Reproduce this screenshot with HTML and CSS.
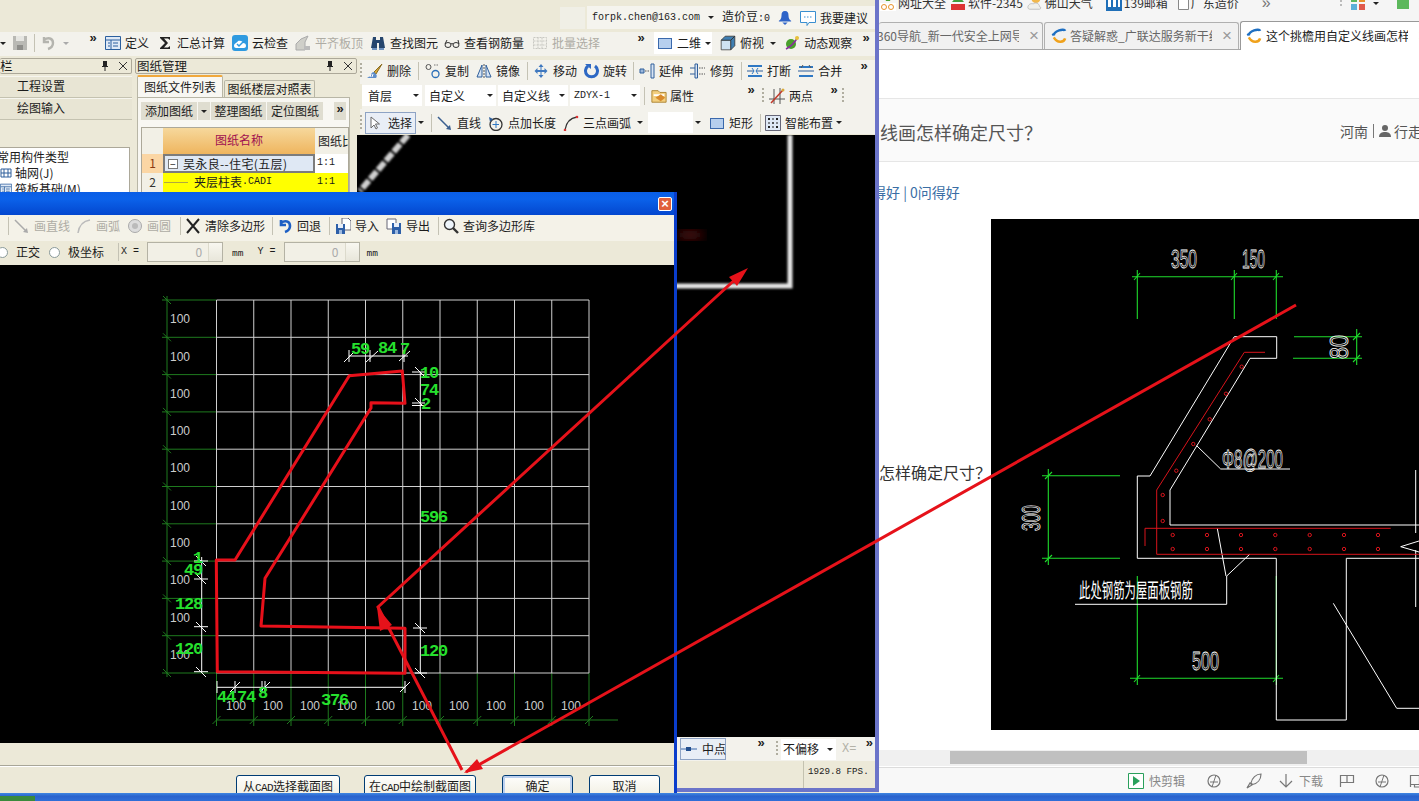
FILE: index.html
```html
<!DOCTYPE html>
<html lang="zh">
<head>
<meta charset="utf-8">
<title>挑檐截面</title>
<link rel="stylesheet" href="styles.css">
</head>
<body>
<svg class="sprite" aria-hidden="true">
  <symbol id="i-save" viewBox="0 0 16 16"><path d="M1 1h14v14H1z" fill="#b9b9b4"/><path d="M4 1h8v5H4z" fill="#e6e6e2"/><path d="M5 10h6v5H5z" fill="#8e8e8a"/></symbol>
  <symbol id="i-undo" viewBox="0 0 16 16"><path d="M4 5c4-3 9-2 9 3 0 3-2 5-5 6M4 2v5h5" fill="none" stroke="#b4b4ae" stroke-width="2.4"/></symbol>
  <symbol id="i-undob" viewBox="0 0 16 16"><path d="M4 5c4-3 9-2 9 3 0 3-2 5-5 6M4 2v5h5" fill="none" stroke="#1d5fc4" stroke-width="2.6"/></symbol>
  <symbol id="i-def" viewBox="0 0 16 16"><path d="M.5 1.5h15v13H.5z" fill="#dfe9f6" stroke="#2b5f9e"/><path d="M1 5h14M6 5v9M3 8h2M3 11h2M8 8h5M8 11h5" stroke="#2b5f9e" fill="none"/></symbol>
  <symbol id="i-sum" viewBox="0 0 16 16"><path d="M3 2h10v3l-2-1.500H7l4 4.500-4 4.500h4l2-1.500v3H3v-1l5-5-5-5z" fill="#222"/></symbol>
  <symbol id="i-cloud" viewBox="0 0 16 16"><rect width="16" height="16" rx="3" fill="#2f9ae0"/><path d="M2 11c0-3 3-3 4-5 3-1 5 1 5 2 2 0 3 1 3 3 0 1-1 2-2 2H4c-1 0-2-1-2-2z" fill="#fff"/><path d="M5 9l2 2 4-4" stroke="#2f9ae0" stroke-width="1.500" fill="none"/></symbol>
  <symbol id="i-level" viewBox="0 0 16 16"><path d="M1 15V9l5-5 7-3-3 6v8z" fill="#cfcfc9" stroke="#aaa"/><path d="M9 11h6v4H9z" fill="#bbb"/></symbol>
  <symbol id="i-bino" viewBox="0 0 16 16"><path d="M3 2h3v3h4V2h3l2 11H9V8H7v5H1z" fill="#26466e"/><path d="M2 13h5v2H2zM9 13h5v2H9z" fill="#6f93c0"/></symbol>
  <symbol id="i-glass" viewBox="0 0 16 16"><ellipse cx="4" cy="10" rx="3" ry="2.500" fill="none" stroke="#333"/><ellipse cx="12" cy="10" rx="3" ry="2.500" fill="none" stroke="#333"/><path d="M7 9q1-1 2 0M1 9l2-4M15 9l-1-4" fill="none" stroke="#333"/></symbol>
  <symbol id="i-batch" viewBox="0 0 16 16"><path d="M1.500 2.500h13v11h-13zM1.500 6h13M1.500 10h13M6 2.500v11M10 2.500v11" fill="none" stroke="#c8c8c2" stroke-dasharray="2 1"/></symbol>
  <symbol id="i-axis" viewBox="0 0 12 12"><path d="M1 2h10v8H1zM1 6h10M4 2v8M8 2v8" fill="none" stroke="#2f5f9b"/></symbol>
  <symbol id="i-rect" viewBox="0 0 16 16"><rect x="1.500" y="3.500" width="13" height="10" fill="#b6cfee" stroke="#3a69ac"/></symbol>
  <symbol id="i-cube" viewBox="0 0 20 20"><path d="M1.500 6.500h12v12h-12z" fill="#cfe3f2" stroke="#444"/><path d="M1.500 6.500l5-5h12l-5 5zM13.500 6.500l5-5v12l-5 5z" fill="#3f7fb2" stroke="#333"/></symbol>
  <symbol id="i-orbit" viewBox="0 0 16 16"><circle cx="7" cy="9" r="5" fill="#4aa02c"/><path d="M2 14C6 12 11 7 14 2" stroke="#8a2f9e" stroke-width="1.500" fill="none"/><circle cx="13" cy="3" r="2" fill="#e8c33a"/></symbol>
  <symbol id="i-del" viewBox="0 0 16 16"><path d="M15 1L7 9l2 2z" fill="#d8a93a" stroke="#8a6c20"/><path d="M7 9c-2 0-3 2-4 4l-3 2h9c1-1 1-3 0-4z" fill="#5f8ecb"/><path d="M4 11l-1 3M6 11l-1 3" stroke="#fff"/></symbol>
  <symbol id="i-copy" viewBox="0 0 16 16"><circle cx="3.500" cy="4" r="2.500" fill="none" stroke="#555"/><circle cx="10.500" cy="11" r="3.500" fill="none" stroke="#2b6fb8" stroke-width="1.300"/><path d="M9 2h5" stroke="#777" stroke-dasharray="1.500 1"/></symbol>
  <symbol id="i-mirror" viewBox="0 0 16 16"><path d="M6 2L1 14h5zM10 2l5 12h-5z" fill="#d6e3f3" stroke="#2f5f9b"/><path d="M8 1v14" stroke="#555" stroke-dasharray="2 1"/></symbol>
  <symbol id="i-move" viewBox="0 0 16 16"><path d="M8 1l2.500 3h-2v3h3v-2l3 3-3 3V9h-3v3h2L8 15l-2.500-3h2V9h-3v2l-3-3 3-3v2h3V4h-2z" fill="#3f78bf"/></symbol>
  <symbol id="i-rotate" viewBox="0 0 16 16"><path d="M5 3a6 6 0 1 0 7 0" fill="none" stroke="#2d68c4" stroke-width="3"/><path d="M2 1h6v5z" fill="#2d68c4"/></symbol>
  <symbol id="i-extend" viewBox="0 0 16 16"><path d="M1 6h4v4H1z" fill="#9cb8dc" stroke="#2f5f9b"/><path d="M6 8h5" stroke="#555" stroke-dasharray="1.500 1"/><path d="M12 1h3v14h-3z" fill="#d8e4f3" stroke="#2f5f9b"/></symbol>
  <symbol id="i-trim" viewBox="0 0 16 16"><path d="M5 1h2.500v14H5z" fill="#d8e4f3" stroke="#2f5f9b"/><path d="M0 5h5M0 11h5" stroke="#2f5f9b"/><path d="M9 5h6M9 11h6" stroke="#555" stroke-dasharray="1.500 1"/></symbol>
  <symbol id="i-break" viewBox="0 0 16 16"><path d="M1 3h14M1 13h14" stroke="#2f78c4" stroke-width="2"/><path d="M0 8h7M9 8h7" stroke="#2f5f9b"/><path d="M5 5l2 3-2 3M11 5L9 8l2 3" stroke="#2f78c4" fill="none"/></symbol>
  <symbol id="i-merge" viewBox="0 0 16 16"><path d="M1 4h14M1 13h14" stroke="#2f78c4" stroke-width="2"/><path d="M0 8h16" stroke="#2f5f9b"/><path d="M5 2l-2 3M11 2l2 3" stroke="#555"/></symbol>
  <symbol id="i-prop" viewBox="0 0 18 18"><path d="M1 3h7l2 2h7v11H1z" fill="#f3cf7f" stroke="#a8802c"/><path d="M3 7h12v2H3z" fill="#fff"/><path d="M5 11l6-4 5 4-5 4z" fill="#d88a2c"/></symbol>
  <symbol id="i-two" viewBox="0 0 16 16"><path d="M0 11h16M5 1v15M11 0v16" stroke="#555" fill="none"/><path d="M2 15L14 2" stroke="#c0392b" stroke-width="1.500"/><circle cx="14" cy="2" r="1.500" fill="#d8a93a"/></symbol>
  <symbol id="i-arrow" viewBox="0 0 16 16"><path d="M4 2v11l3-3 2 4 1.500-1-2-4h4z" fill="#fff" stroke="#6a6a6a"/></symbol>
  <symbol id="i-line" viewBox="0 0 16 16"><path d="M1 2l11 11" stroke="#3a5f8f" stroke-width="1.500"/><path d="M14 15l-5-1 4-4z" fill="#3a5f8f"/></symbol>
  <symbol id="i-linegr" viewBox="0 0 16 16"><path d="M1 2l11 11" stroke="#aaa" stroke-width="1.500"/><path d="M14 15l-5-1 4-4z" fill="#aaa"/></symbol>
  <symbol id="i-plen" viewBox="0 0 16 16"><circle cx="8" cy="9.500" r="6" fill="none" stroke="#333" stroke-width="1.300"/><path d="M8 6v7M4.500 9.500H11" stroke="#2f78c4"/><path d="M1 2l4 2-3 3z" fill="#2f5f9b"/></symbol>
  <symbol id="i-arc" viewBox="0 0 16 16"><path d="M2 15C3 8 7 3 14 2" stroke="#333" fill="none" stroke-width="1.300"/><circle cx="2" cy="15" r="1.300" fill="#d33"/><circle cx="14" cy="2" r="1.300" fill="#d33"/></symbol>
  <symbol id="i-arcgr" viewBox="0 0 16 16"><path d="M2 15C3 8 7 3 14 2" stroke="#bbb" fill="none" stroke-width="1.500"/></symbol>
  <symbol id="i-circlegr" viewBox="0 0 16 16"><circle cx="8" cy="8" r="6.500" fill="#ddd" stroke="#aaa"/><circle cx="8" cy="8" r="3" fill="#bbb"/></symbol>
  <symbol id="i-smart" viewBox="0 0 16 16"><path d="M.5.5h15v15H.5z" fill="#dfe9f6" stroke="#667"/><path d="M8 3v10M3 8h10" stroke="#222" stroke-dasharray="2 2"/><path d="M3 3h2v2H3zM11 3h2v2h-2zM3 11h2v2H3zM11 11h2v2h-2z" fill="#222"/></symbol>
  <symbol id="i-bell" viewBox="0 0 14 16"><path d="M7 0c3 0 4 2 4 5s1 5 3 6v1H0v-1c2-1 3-3 3-6s1-5 4-5z" fill="#2f64c8"/><path d="M4 13h6l-3 3z" fill="#2f64c8"/></symbol>
  <symbol id="i-chat" viewBox="0 0 16 16"><path d="M.5 1.500h15v11H9l-2 3v-3H.5z" fill="#fff" stroke="#3a8fd0"/><path d="M4 7h8" stroke="#3a8fd0" stroke-dasharray="1.500 1.500"/></symbol>
  <symbol id="i-x" viewBox="0 0 16 16"><path d="M2 1l12 14M14 1L2 15" stroke="#222" stroke-width="2"/></symbol>
  <symbol id="i-imp" viewBox="0 0 16 16"><path d="M7 0h6l3 3v9H7z" fill="#fff" stroke="#667"/><path d="M1 6h9v10H1z" fill="#2d5fa8"/><path d="M3 6h5v4H3z" fill="#e8eef8"/><path d="M4 12h3v4H4z" fill="#9db9df"/></symbol>
  <symbol id="i-exp" viewBox="0 0 16 16"><path d="M1 1h9v10H1z" fill="#fff" stroke="#667"/><path d="M6 5h9v11H6z" fill="#2d5fa8"/><path d="M8 5h5v4H8z" fill="#e8eef8"/><path d="M9 12h3v4H9z" fill="#9db9df"/></symbol>
  <symbol id="i-find" viewBox="0 0 16 16"><circle cx="6.500" cy="6.500" r="5" fill="#eef5fb" stroke="#333" stroke-width="1.400"/><path d="M10 10l5 5" stroke="#333" stroke-width="2.400"/></symbol>
  <symbol id="i-mid" viewBox="0 0 16 16"><path d="M0 8h16" stroke="#3a69ac"/><path d="M5 6h5v4H5z" fill="#234f8f"/></symbol>
  <symbol id="i-ie" viewBox="0 0 17 17"><path d="M3 8C3 3 14 0 15 3" fill="none" stroke="#1e6fc2" stroke-width="2.600"/><path d="M3 10c4 7 11 5 12 1" fill="none" stroke="#f0a21c" stroke-width="2.600"/><circle cx="2" cy="7" r="1.200" fill="#1e6fc2"/></symbol>
  <symbol id="i-person" viewBox="0 0 12 12"><circle cx="6" cy="3" r="3" fill="#666"/><path d="M0 12c0-4 3-5 6-5s6 1 6 5z" fill="#666"/></symbol>
  <symbol id="i-pin" viewBox="0 0 10 12"><path d="M3 1h4v5h1v1H5.500v4h-1V7H2V6h1z" fill="#222"/></symbol>
  <symbol id="i-close" viewBox="0 0 10 10"><path d="M1 1l8 8M9 1L1 9" stroke="#333"/></symbol>
  <symbol id="i-hao" viewBox="0 0 16 16"><path d="M4 0h8l-2 6H6z" fill="#4a9f2c"/><path d="M0 8h16v8H0z" fill="#fff"/><circle cx="4" cy="12" r="2.500" fill="none" stroke="#e8912c"/><circle cx="11" cy="12" r="2.500" fill="none" stroke="#e8912c"/></symbol>
  <symbol id="i-2345" viewBox="0 0 16 16"><path d="M2 7l6-7 6 7z" fill="#3f9f3c"/><path d="M1 9h14v6H1z" fill="#d33"/></symbol>
  <symbol id="i-sun" viewBox="0 0 18 16"><circle cx="10" cy="3" r="5" fill="#f2b84a"/><path d="M1 13c0-3 3-5 6-4 2-2 7-1 7 3 2 0 2 3 0 3H3c-1 0-2-1-2-2z" fill="#f0f0ea" stroke="#bbb"/></symbol>
  <symbol id="i-139" viewBox="0 0 16 16"><path d="M0 0h16v16H0z" fill="#1f6fb8"/><path d="M2 3h3v9H2zM7 3h3v9H7zM12 3h2v9h-2z" fill="#fff"/></symbol>
  <symbol id="i-doc" viewBox="0 0 11 14"><path d="M.5.500h7l3 3v10H.5z" fill="#fff" stroke="#888"/></symbol>
  <symbol id="i-apps" viewBox="0 0 14 14"><path d="M0 0h6v6H0z" fill="#5cb85c"/><path d="M8 0h6v6H8z" fill="#e8912c"/><path d="M0 8h6v6H0z" fill="#5cb0d8"/><path d="M8 8h6v6H8z" fill="#e05a4c"/></symbol>
  <symbol id="i-cut" viewBox="0 0 16 16"><path d="M.5.500h15v15H.5z" fill="#fff" stroke="#2aa05c"/><path d="M5 3l7 5-7 5z" fill="#2aa05c"/></symbol>
  <symbol id="i-e1" viewBox="0 0 16 16"><circle cx="8" cy="8" r="6" fill="none" stroke="#777" stroke-width="1.200"/><path d="M4 9h8M10 2L6 14" stroke="#777"/></symbol>
  <symbol id="i-rocket" viewBox="0 0 16 16"><path d="M15 1c-5 0-9 4-10 9l1.500 1.500c5-1 8.500-5 8.500-10.500zM1 15l3-5 2 2z" fill="none" stroke="#777" stroke-width="1.200"/></symbol>
  <symbol id="i-down" viewBox="0 0 16 16"><path d="M8 1v13M2 8l6 6 6-6" fill="none" stroke="#777" stroke-width="1.200"/></symbol>
  <symbol id="i-flag" viewBox="0 0 16 16"><path d="M1.500 14V2.500h13v7h-13M8 2.500v7" fill="none" stroke="#777" stroke-width="1.200"/></symbol>
  <symbol id="i-win" viewBox="0 0 16 16"><path d="M1.500 14V2.500h9v9h-9zM10.500 6h4v8h-9v-2.500" fill="none" stroke="#777" stroke-width="1.200"/></symbol>
</svg>

<div class="desktop">

  <section class="app">
    <div class="strip">
      <span class="strip-cell"></span>
      <div class="strip-bar">
        <span class="lat">forpk.chen@163.com</span>
        <i class="caret ml8"></i>
        <span class="ml8">造价豆<span class="lat">:0</span></span>
        <svg class="ic14 ml8"><use href="#i-bell"/></svg>
        <svg class="ic ml8"><use href="#i-chat"/></svg>
        <span class="ml4">我要建议</span>
      </div>
    </div>

    <div class="tb row2">
      <i class="caret"></i>
      <svg class="ic ml6"><use href="#i-save"/></svg>
      <i class="sep ml6"></i>
      <svg class="ic ml5"><use href="#i-undo"/></svg>
      <i class="caret ml7 dim"></i>
      <b class="chev ml19">»</b>
      <span class="ti ml7"><svg class="ic"><use href="#i-def"/></svg>定义</span>
      <span class="ti ml8"><svg class="ic"><use href="#i-sum"/></svg>汇总计算</span>
      <span class="ti ml7"><svg class="ic"><use href="#i-cloud"/></svg>云检查</span>
      <span class="ti ml7 off"><svg class="ic"><use href="#i-level"/></svg>平齐板顶</span>
      <span class="ti ml7"><svg class="ic"><use href="#i-bino"/></svg>查找图元</span>
      <span class="ti ml6"><svg class="ic"><use href="#i-glass"/></svg>查看钢筋量</span>
      <span class="ti ml8 off"><svg class="ic"><use href="#i-batch"/></svg>批量选择</span>
      <b class="chev ml36">»</b>
      <span class="view ml8"><svg class="ic"><use href="#i-rect"/></svg><span>二维</span><i class="caret"></i></span>
      <span class="ti ml8"><svg class="ic"><use href="#i-cube"/></svg>俯视</span>
      <i class="caret ml6"></i>
      <span class="ti ml8"><svg class="ic"><use href="#i-orbit"/></svg>动态观察</span>
      <b class="chev ml9">»</b>
    </div>

    <div class="app-body">
      <aside class="side">
        <div class="ptitle"><span class="ptitle-t cut">栏</span><svg class="pin"><use href="#i-pin"/></svg><svg class="cls"><use href="#i-close"/></svg></div>
        <div class="nav">工程设置</div>
        <div class="nav">绘图输入</div>
        <div class="tree">
          <div class="tree-h">常用构件类型</div>
          <div class="tree-i"><svg class="ic12"><use href="#i-axis"/></svg>轴网(J)</div>
          <div class="tree-i"><svg class="ic12"><use href="#i-def"/></svg>筏板基础(M)</div>
        </div>
      </aside>

      <aside class="drawings">
        <div class="ptitle"><span class="ptitle-t">图纸管理</span><svg class="pin"><use href="#i-pin"/></svg><svg class="cls"><use href="#i-close"/></svg></div>
        <div class="tabs">
          <span class="dtab on">图纸文件列表</span>
          <span class="dtab">图纸楼层对照表</span>
        </div>
        <div class="dbody">
          <div class="dtools">
            <span class="dbtn w57">添加图纸</span><span class="dbtn w12"><i class="caret"></i></span><span class="dbtn w56">整理图纸</span><span class="dbtn w57">定位图纸</span>
            <b class="dbtn w13 more">»</b>
          </div>
          <div class="dtable">
            <span class="th0"></span><span class="th">图纸名称</span><span class="th2">图纸比</span>
            <span class="num n1">1</span><span class="nm sel-cell"><i class="minus">−</i>吴永良--住宅(五层)</span><span class="sc lat">1:1</span>
            <span class="num">2</span><span class="nm yel"><i class="tl"></i>夹层柱表<span class="lat">.CADI</span></span><span class="sc yel lat">1:1</span>
          </div>
        </div>
      </aside>

      <main class="work">
        <div class="tb row3">
          <i class="grip"></i>
          <span class="ti ml5"><svg class="ic"><use href="#i-del"/></svg>删除</span>
          <i class="sep ml7"></i>
          <span class="ti ml6"><svg class="ic"><use href="#i-copy"/></svg>复制</span>
          <span class="ti ml7"><svg class="ic"><use href="#i-mirror"/></svg>镜像</span>
          <i class="sep ml7"></i>
          <span class="ti ml5"><svg class="ic"><use href="#i-move"/></svg>移动</span>
          <span class="ti ml6"><svg class="ic"><use href="#i-rotate"/></svg>旋转</span>
          <i class="sep ml6"></i>
          <span class="ti ml5"><svg class="ic"><use href="#i-extend"/></svg>延伸</span>
          <span class="ti ml7"><svg class="ic"><use href="#i-trim"/></svg>修剪</span>
          <i class="sep ml7"></i>
          <span class="ti ml5"><svg class="ic"><use href="#i-break"/></svg>打断</span>
          <span class="ti ml7"><svg class="ic"><use href="#i-merge"/></svg>合并</span>
          <b class="chev ml17">»</b>
        </div>
        <div class="tb row4">
          <span class="sel w60">首层<i class="caret"></i></span>
          <span class="sel w71 ml3">自定义<i class="caret"></i></span>
          <span class="sel w70 ml2">自定义线<i class="caret"></i></span>
          <span class="sel w70 ml2"><span class="lat">ZDYX-1</span><i class="caret"></i></span>
          <i class="sep ml4"></i>
          <span class="ti ml6 tight"><svg class="ic"><use href="#i-prop"/></svg>属性</span>
          <b class="chev ml52">»</b>
          <i class="grip ml6"></i>
          <span class="ti ml5"><svg class="ic"><use href="#i-two"/></svg>两点</span>
          <b class="chev ml16">»</b>
          <i class="grip ml3"></i>
        </div>
        <div class="tb row5">
          <i class="grip"></i>
          <span class="pick ml3"><svg class="ic"><use href="#i-arrow"/></svg>选择</span>
          <i class="caret ml2"></i>
          <i class="sep ml7"></i>
          <span class="ti ml5"><svg class="ic"><use href="#i-line"/></svg>直线</span>
          <span class="ti ml7"><svg class="ic"><use href="#i-plen"/></svg>点加长度</span>
          <span class="ti ml7"><svg class="ic"><use href="#i-arc"/></svg>三点画弧</span>
          <i class="caret ml6"></i>
          <span class="blank ml5"></span>
          <i class="caret ml2"></i>
          <span class="ti ml8"><svg class="ic"><use href="#i-rect"/></svg>矩形</span>
          <i class="sep ml7"></i>
          <span class="ti ml4"><svg class="ic"><use href="#i-smart"/></svg>智能布置</span>
          <i class="caret ml3"></i>
        </div>
        <svg class="cad-bg" viewBox="357 136 518 602">
          <defs>
            <filter id="soft"><feGaussianBlur stdDeviation="1.300"/></filter>
            <filter id="softer"><feGaussianBlur stdDeviation="6"/></filter>
          </defs>
          <rect x="357" y="136" width="518" height="602" fill="#000"/>
          <path d="M790 136V287H670" fill="none" stroke="#e4e4e4" stroke-width="5" filter="url(#soft)"/>
          <path d="M408 136L360 192" fill="none" stroke="#d0d0d0" stroke-width="6" stroke-dasharray="10 2" filter="url(#soft)"/>
          <ellipse cx="690" cy="236" rx="14" ry="5" fill="#5a1010" filter="url(#softer)"/>
        </svg>
        <div class="tb status">
          <span class="pick mid"><svg class="ic"><use href="#i-mid"/></svg>中点</span>
          <b class="chev ml30">»</b>
          <i class="grip ml10"></i>
          <span class="nudge ml3">不偏移<i class="caret"></i></span>
          <span class="xeq ml6">X=</span>
          <b class="chev ml8">»</b>
        </div>
        <div class="fps"><span class="fps-v lat">1929.8 FPS.</span></div>
      </main>
    </div>
  </section>

  <section class="browser">
    <div class="marks">
      <span class="mk"><svg class="ic"><use href="#i-hao"/></svg>网址大全</span>
      <span class="mk"><svg class="ic"><use href="#i-2345"/></svg>软件-2345</span>
      <span class="mk"><svg class="ic"><use href="#i-sun"/></svg>佛山天气</span>
      <span class="mk"><svg class="ic"><use href="#i-139"/></svg>139邮箱</span>
      <span class="mk"><svg class="ic11"><use href="#i-doc"/></svg>广东造价</span>
      <span class="mk-more">»</span>
      <span class="mk-grip"></span>
      <svg class="ic14 apps"><use href="#i-apps"/></svg>
      <i class="caret ml8"></i>
      <span class="mk-green"></span>
    </div>
    <div class="btabs">
      <span class="btab b1"><span class="btab-t">360导航_新一代安全上网导</span><span class="btab-x">×</span></span>
      <span class="btab b2"><svg class="ic"><use href="#i-ie"/></svg><span class="btab-t">答疑解惑_广联达服务新干线</span><span class="btab-x">×</span></span>
      <span class="btab b3"><svg class="ic"><use href="#i-ie"/></svg><span class="btab-t">这个挑檐用自定义线画怎样</span><span class="btab-x">×</span></span>
    </div>
    <div class="band">
      <h1 class="q-title">线画怎样确定尺寸？</h1>
      <div class="q-user"><span>河南</span><i class="bar"></i><svg class="ic12"><use href="#i-person"/></svg><span>行走</span></div>
    </div>
    <div class="stats">得好 | 0问得好</div>
    <div class="post">
      <p class="post-q">怎样确定尺寸？</p>
      <svg class="detail" viewBox="991 219 428 511">
        <rect x="991" y="219" width="428" height="511" fill="#000"/>
        <g fill="none" stroke="#1fdc2c" stroke-width="1.100">
          <path d="M1132 276.700H1283M1137.300 270V319M1234.300 270V319M1276.300 270V319"/>
          <path d="M1294 336.700H1362M1293 358.300H1362M1356.700 329V365"/>
          <path d="M1042 475.700H1120M1042 558.300H1120M1048.300 469V565"/>
          <path d="M1137.300 576V685M1276.300 576V685M1130 678.300H1283"/>
          <path d="M1134 280l6-7M1231 280l6-7M1273 280l6-7M1353 340l7-7M1353 362l7-7M1045 479l7-7M1045 562l7-7M1134 682l6-7M1273 682l6-7"/>
        </g>
        <g fill="none" stroke="#fff" stroke-width="1">
          <path d="M1234.300 336.700H1276.700V358.300H1250L1170 490V525H1419"/>
          <path d="M1234.300 336.700L1150 476H1137.300V558.300H1276.300V720H1346.300V558.300H1419"/>
          <path d="M1415.700 470V533M1415.700 550V607M1400.700 546.700L1419 541M1400.700 546.700L1419 552"/>
          <path d="M1333.300 603.300L1396.700 708.300H1419"/>
          <path d="M1217.300 528.300L1226 576M1250 554L1226.700 576V604.300H1075"/>
          <path d="M1196.700 445.700L1220.700 469H1290"/>
        </g>
        <g fill="none" stroke="#d8141c" stroke-width="1">
          <path d="M1265 352.300H1244.300L1156.700 490V554.300H1419"/>
          <path d="M1145 546V528.300H1390.700"/>
          <circle cx="1172.700" cy="535" r="1.700"/><circle cx="1207" cy="535" r="1.700"/><circle cx="1241" cy="535" r="1.700"/><circle cx="1275.300" cy="535" r="1.700"/><circle cx="1309.700" cy="535" r="1.700"/><circle cx="1344" cy="535" r="1.700"/><circle cx="1378" cy="535" r="1.700"/>
          <circle cx="1172.700" cy="549" r="1.700"/><circle cx="1207" cy="549" r="1.700"/><circle cx="1241" cy="549" r="1.700"/><circle cx="1275.300" cy="549" r="1.700"/><circle cx="1309.700" cy="549" r="1.700"/><circle cx="1344" cy="549" r="1.700"/><circle cx="1378" cy="549" r="1.700"/>
          <circle cx="1241.700" cy="366.700" r="1.700"/><circle cx="1226" cy="393.700" r="1.700"/><circle cx="1209.700" cy="419.300" r="1.700"/><circle cx="1193.300" cy="444" r="1.700"/><circle cx="1176.300" cy="470.700" r="1.700"/><circle cx="1162.700" cy="495" r="1.700"/><circle cx="1162.700" cy="521" r="1.700"/>
        </g>
        <g class="cadnum">
          <text x="1171" y="268" textLength="26" lengthAdjust="spacingAndGlyphs">350</text>
          <text x="1242" y="268" textLength="23" lengthAdjust="spacingAndGlyphs">150</text>
          <text x="1192" y="670" textLength="27" lengthAdjust="spacingAndGlyphs">500</text>
          <text x="1222" y="468" textLength="61" lengthAdjust="spacingAndGlyphs">Φ8@200</text>
          <text transform="translate(1332,359) rotate(-90)" textLength="24" lengthAdjust="spacingAndGlyphs" x="0" y="16">80</text>
          <text transform="translate(1022,531) rotate(-90)" textLength="26" lengthAdjust="spacingAndGlyphs" x="0" y="18">300</text>
        </g>
        <text class="cadnote" transform="translate(1079,598) scale(1,1.800)">此处钢筋为屋面板钢筋</text>
      </svg>
    </div>
    <div class="hscroll"><span class="thumb"></span></div>
    <div class="bstatus">
      <svg class="ic first"><use href="#i-cut"/></svg><span class="ml5">快剪辑</span>
      <svg class="ic ml21"><use href="#i-e1"/></svg>
      <svg class="ic ml24"><use href="#i-rocket"/></svg>
      <svg class="ic ml16"><use href="#i-down"/></svg><span class="ml5">下载</span>
      <svg class="ic ml16"><use href="#i-flag"/></svg>
      <svg class="ic ml19"><use href="#i-e1"/></svg>
      <svg class="ic ml19"><use href="#i-win"/></svg>
    </div>
  </section>

  <section class="dialog">
    <div class="dlg-title"><span class="dlg-x">×</span></div>
    <div class="tb dt1">
      <i class="sep ml8"></i>
      <span class="ti ml5 off"><svg class="ic"><use href="#i-linegr"/></svg>画直线</span>
      <span class="ti ml6 off"><svg class="ic"><use href="#i-arcgr"/></svg>画弧</span>
      <span class="ti ml7 off"><svg class="ic"><use href="#i-circlegr"/></svg>画圆</span>
      <i class="sep ml9"></i>
      <span class="ti ml4"><svg class="ic"><use href="#i-x"/></svg>清除多边形</span>
      <i class="sep ml7"></i>
      <span class="ti ml4"><svg class="ic"><use href="#i-undob"/></svg>回退</span>
      <i class="sep ml8"></i>
      <span class="ti ml5"><svg class="ic"><use href="#i-imp"/></svg>导入</span>
      <span class="ti ml7"><svg class="ic"><use href="#i-exp"/></svg>导出</span>
      <i class="sep ml8"></i>
      <span class="ti ml4"><svg class="ic"><use href="#i-find"/></svg>查询多边形库</span>
    </div>
    <div class="tb dt2">
      <i class="radio first-radio"></i>
      <span class="ml8">正交</span>
      <i class="radio ml9"></i>
      <span class="ml8">极坐标</span>
      <i class="sep ml14"></i>
      <span class="lat ml2">X =</span>
      <span class="num-in ml8">0<i class="spin"></i></span>
      <span class="unit ml9">mm</span>
      <span class="lat ml14">Y =</span>
      <span class="num-in ml8">0<i class="spin"></i></span>
      <span class="unit ml7">mm</span>
    </div>
    <svg class="section" viewBox="0 265 674 478">
      <rect x="0" y="265" width="674" height="478" fill="#000"/>
      <g class="g-dark">
        <path d="M167 296V677M162 300H216M162 337.300H216M162 374.600H216M162 411.900H216M162 449.200H216M162 486.500H216M162 523.800H216M162 561.100H216M162 598.400H216M162 635.700H216M162 673H216"/>
        <path d="M163 296l8 8M163 333.300l8 8M163 370.600l8 8M163 407.900l8 8M163 445.200l8 8M163 482.500l8 8M163 519.800l8 8M163 557.100l8 8M163 594.400l8 8M163 631.700l8 8M163 669l8 8"/>
        <path d="M216.500 673V726M253.750 673V726M291 673V726M328.250 673V726M365.500 673V726M402.750 673V726M440 673V726M477.250 673V726M514.500 673V726M551.750 673V726M589 673V726M216 720H618"/>
        <path d="M212.500 724l8-8M249.750 724l8-8M287 724l8-8M324.250 724l8-8M361.500 724l8-8M398.750 724l8-8M436 724l8-8M473.250 724l8-8M510.500 724l8-8M547.750 724l8-8M585 724l8-8"/>
      </g>
      <path class="g-grid" d="M216.500 300V673M253.750 300V673M291 300V673M328.250 300V673M365.500 300V673M402.750 300V673M440 300V673M477.250 300V673M514.500 300V673M551.750 300V673M589 300V673M216.500 300H589M216.500 337.300H589M216.500 374.600H589M216.500 411.900H589M216.500 449.200H589M216.500 486.500H589M216.500 523.800H589M216.500 561.100H589M216.500 598.400H589M216.500 635.700H589M216.500 673H589"/>
      <g class="g-lbl">
        <text x="170" y="323">100</text><text x="170" y="361">100</text><text x="170" y="398">100</text><text x="170" y="435">100</text><text x="170" y="472">100</text><text x="170" y="510">100</text><text x="170" y="547">100</text><text x="170" y="584">100</text><text x="170" y="622">100</text><text x="170" y="659">100</text>
        <text x="226" y="710">100</text><text x="263" y="710">100</text><text x="300" y="710">100</text><text x="337" y="710">100</text><text x="375" y="710">100</text><text x="412" y="710">100</text><text x="449" y="710">100</text><text x="486" y="710">100</text><text x="524" y="710">100</text><text x="561" y="710">100</text>
      </g>
      <path class="g-dim" d="M349 350V362M344 362L354 352M349 356H408M370 350V362M366 362L378 351M404 350V362M399 361L410 351M420.300 372V673M412 372H425M415 367L425 377M412 403H425M412 405.500H425M415 398L425 408M413 628H427M415 623L425 633M415 673H427M415 668L425 678M201.700 557V673M194 561H208M196 556L206 566M194 579H208M196 574L206 584M194 626.700H208M196 622L206 632M194 671.700H208M196 667L206 677M217 687.300H405M217 681V693M235 681V693M230 692L240 682M262 681V693M265 681V693M260 692L270 682M405 681V693M400 692L410 682"/>
      <path class="g-shape" d="M349.300 375.700L402.300 371 405 403.300 371 402.700 371 408 265 578.300 261 626 405 628.300 405 673.300 217.300 671.700 216.300 560H235Z"/>
      <g class="g-num">
        <text x="351" y="354">59</text><text x="378" y="353">84</text><text x="400" y="354">7</text>
        <text x="420" y="378">10</text><text x="420" y="395">74</text><text x="421" y="409">2</text><text x="420" y="522">596</text>
        <text x="193" y="563">1</text><text x="184" y="575">49</text><text x="175" y="609">128</text><text x="175" y="654">120</text><text x="420" y="656">120</text>
        <text x="217" y="702">44</text><text x="237" y="702">74</text><text x="258" y="698">8</text><text x="321" y="705">376</text>
      </g>
    </svg>
    <div class="dlg-foot">
      <div class="foot-gap"></div>
      <div class="foot-btns">
        <span class="xpbtn b104">从<span class="cad">CAD</span>选择截面图</span>
        <span class="xpbtn b112">在<span class="cad">CAD</span>中绘制截面图</span>
        <span class="xpbtn b71 dflt">确定</span>
        <span class="xpbtn b71 last">取消</span>
      </div>
    </div>
  </section>

  <svg class="arrows" viewBox="0 0 1419 801" aria-hidden="true">
    <path d="M740 275L378 607 462 770M466 772L1296 305" fill="none" stroke="#e6121a" stroke-width="3"/>
    <path d="M748 268L737 286 729 277Z M377 607L392 625 380 631Z M464 773L483 769 477 759Z" fill="#e6121a"/>
  </svg>

  <footer class="taskbar"><span class="start"></span></footer>
</div>
</body>
</html>
```

FILE: styles.css
```css
* { box-sizing: border-box; }
html, body { margin: 0; padding: 0; }
body {
  width: 1419px;
  height: 801px;
  overflow: hidden;
  background: #ece9d8;
  font: 12px/16px "Noto Sans CJK SC", "Liberation Sans", sans-serif;
  color: #1c1c1c;
}
i, b { font-style: normal; }
.sprite { position: absolute; width: 0; height: 0; }
.desktop { position: relative; width: 1419px; height: 801px; overflow: hidden; }
.lat { font-family: "Liberation Mono", "DejaVu Sans Mono", monospace; font-size: 10px; }
.unit { font: 9.500px "DejaVu Sans Mono", monospace; }
.cad { font: 11px "Liberation Mono", monospace; letter-spacing: -.6px; }

.ic { width: 16px; height: 16px; flex: none; display: block; }
.ic14 { width: 14px; height: 14px; flex: none; display: block; }
.ic12 { width: 12px; height: 12px; flex: none; display: block; }
.ic11 { width: 11px; height: 14px; flex: none; display: block; }

.ml2 { margin-left: 2px; } .ml3 { margin-left: 3px; } .ml4 { margin-left: 4px; }
.ml5 { margin-left: 5px; } .ml6 { margin-left: 6px; } .ml7 { margin-left: 7px; }
.ml8 { margin-left: 8px; } .ml9 { margin-left: 9px; } .ml10 { margin-left: 10px; }
.ml14 { margin-left: 14px; } .ml16 { margin-left: 16px; } .ml17 { margin-left: 17px; }
.ml19 { margin-left: 19px; } .ml21 { margin-left: 21px; } .ml24 { margin-left: 24px; }
.ml30 { margin-left: 30px; } .ml36 { margin-left: 36px; } .ml52 { margin-left: 52px; }

.caret {
  flex: none;
  width: 0;
  height: 0;
  border: 3px solid transparent;
  border-top: 3px solid #222;
  border-bottom: 0;
  display: block;
  margin-right: 0;
  box-sizing: content-box;
}
.caret.dim { border-top-color: #aaa; }
.sep { flex: none; display: block; width: 1px; height: 18px; background: #c4c2b4; }
.chev { flex: none; align-self: flex-start; width: 10px; text-align: center; font: bold 13px/12px "Liberation Sans", sans-serif; color: #222; }
.grip { flex: none; display: block; width: 2px; height: 16px; background: repeating-linear-gradient(#b0aea0 0 2px, transparent 2px 4px); }

.tb { display: flex; align-items: center; flex: none; white-space: nowrap; }
.ti { display: inline-flex; align-items: center; gap: 4px; flex: none; }
.ti.tight { gap: 3px; }
.off { color: #aeaca4; }

/* application window */
.app {
  position: absolute;
  left: 0;
  top: 0;
  width: 879px;
  height: 792px;
  display: flex;
  flex-direction: column;
  background: #ece9d8;
  border-right: 4px solid #6b74c9;
  border-bottom: 4px solid #6b74c9;
}
.strip { height: 32px; flex: none; display: flex; align-items: flex-end; justify-content: flex-start; padding: 0 0 3px 560px; }
.strip-cell { width: 25px; height: 22px; background: #f0efe6; flex: none; }
.strip-bar { margin-left: 2px; width: 288px; height: 23px; background: #f5f4ee; display: flex; align-items: center; padding-left: 5px; white-space: nowrap; }
.strip-bar .lat { width: 108px; }
.row2 { height: 24px; background: #f3f2ec; padding-bottom: 2px; }
.view { display: flex; align-items: center; width: 58px; height: 22px; background: #fff; padding-left: 3px; gap: 4px; }

.app-body { flex: 1; display: flex; min-height: 0; padding-top: 2px; }
.side { width: 132px; flex: none; display: flex; flex-direction: column; }
.ptitle { height: 16px; flex: none; display: flex; align-items: center; border: 1px solid #aca899; border-radius: 2px; background: #ece9d8; position: relative; }
.side .ptitle { border-left: 0; }
.ptitle-t { font-size: 12.500px; line-height: 14px; margin-left: 1px; flex: 1; }
.cut { margin-left: 0; }
.pin { width: 10px; height: 12px; flex: none; margin-right: 8px; }
.cls { width: 10px; height: 10px; flex: none; margin-right: 3px; }
.nav { height: 22px; flex: none; background: #e8e5d4; border-bottom: 1px solid #c4c2b0; border-top: 1px solid #f6f5ee; padding-left: 17px; line-height: 18px; }
.ptitle + .nav { margin-top: 2px; }
.tree { margin-top: 27px; width: 130px; flex: 1; background: #fff; border: 1px solid #aca899; border-left: 0; overflow: hidden; padding-top: 1px; }
.tree-h { margin-left: -3px; line-height: 16px; }
.tree-i { display: flex; align-items: center; gap: 3px; height: 16px; }

.drawings { width: 222px; margin-left: 3px; flex: none; display: flex; flex-direction: column; }
.tabs { height: 22px; flex: none; display: flex; align-items: flex-end; padding-left: 2px; margin-top: 1px; }
.dtab { width: 91px; height: 17px; background: #ece9d8; border: 1px solid #b8b6a6; border-bottom: 0; text-align: center; line-height: 16px; border-radius: 2px 2px 0 0; margin-left: 1px; }
.dtab.on { width: 86px; height: 22px; margin-left: 0; background: #f8f7f2; border-top: 2px solid #f0a83c; line-height: 20px; }
.dbody { margin-left: 2px; width: 213px; flex: 1; background: #f8f7f2; border: 1px solid #b8b6a6; padding: 4px 0 0 3px; overflow: hidden; }
.dtools { display: flex; height: 18px; align-items: stretch; }
.dbtn { background: #dfddd0; border-right: 1px solid #f8f7f2; display: flex; align-items: center; justify-content: center; flex: none; }
.w57 { width: 57px; } .w12 { width: 13px; } .w56 { width: 56px; } .w13 { width: 13px; }
.more { margin-left: 10px; font: bold 13px/12px "Liberation Sans", sans-serif; padding-bottom: 4px; }
.dtable { margin-top: 7px; width: 208px; height: 70px; background: #fff; border: 1px solid #aca899; display: grid; grid-template-columns: 21px 152px 33px; grid-template-rows: 26px 19px 19px; padding-left: 0; }
.th0, .th2 { background: #f2f0e6; }
.th2 { padding: 5px 0 0 3px; overflow: hidden; white-space: nowrap; }
.th { background: linear-gradient(#f6d89c, #efb55e); color: #a01050; text-align: center; line-height: 24px; }
.num { background: #f2f0e6; text-align: center; line-height: 18px; color: #333; }
.num.n1 { background: #fbd6a4; color: #8a3a10; }
.nm { white-space: nowrap; display: flex; align-items: center; padding-bottom: 1px; }
.sel-cell { background: #dfe8f4; border: 2px solid #7c7c7c; padding: 0 0 0 3px; letter-spacing: .35px; line-height: 14px; }
.minus { width: 10px; height: 10px; border: 1px solid #777; background: #fff; margin-right: 5px; display: flex; align-items: center; justify-content: center; font-size: 10px; line-height: 8px; }
.yel { background: #ffff00; }
.tl { width: 24px; height: 1px; background: #b0a840; margin: 0 6px 0 1px; flex: none; }
.sc { padding-left: 2px; line-height: 18px; }

.work { flex: 1; min-width: 0; margin-left: 0; display: flex; flex-direction: column; padding-top: 2px; }
.row3 { height: 24px; background: #f3f2ec; margin-left: 3px; padding-bottom: 2px; }
.row4 { height: 25px; background: #f3f2ec; margin-left: 5px; padding-bottom: 2px; }
.row5 { height: 25px; background: #f3f2ec; margin-left: 3px; padding-top: 2px; }
.sel { height: 21px; display: flex; align-items: center; justify-content: space-between; background: #fff; padding: 0 3px 0 6px; flex: none; }
.w60 { width: 60px; } .w71 { width: 71px; } .w70 { width: 70px; }
.row4 .sel + .sel { padding-left: 4px; }
.pick { height: 22px; width: 51px; flex: none; display: flex; align-items: center; gap: 5px; background: #e9eef6; border: 1px solid #8ea3c4; padding-left: 1px; }
.blank { width: 45px; height: 21px; background: #fff; flex: none; }
.cad-bg { display: block; width: 518px; height: 602px; flex: none; margin-top: 1px; }
.status { height: 24px; padding-left: 323px; background: #f3f2ec; }
.mid { width: 46px; gap: 5px; padding-left: 0; }
.nudge { width: 55px; height: 21px; background: #fff; display: flex; align-items: center; justify-content: space-between; padding: 0 3px 0 2px; flex: none; }
.xeq { color: #b4b2a8; font: 12px "Liberation Mono", monospace; }
.fps { flex: 1; display: flex; justify-content: flex-end; background: #ece9d8; }
.fps-v { width: 72px; border-left: 1px solid #c4c2b0; padding: 3px 0 0 4px; white-space: nowrap; font-size: 9.200px; }

/* browser window */
.browser {
  position: absolute;
  left: 879px;
  top: 0;
  width: 540px;
  height: 794px;
  background: #fff;
  overflow: hidden;
  display: flex;
  flex-direction: column;
}
.marks { height: 22px; flex: none; background: #f5f5f5; display: flex; align-items: flex-start; margin-top: 0; padding: 0 0 0 1px; overflow: hidden; color: #333; }
.mk { display: inline-flex; align-items: center; gap: 2px; margin: -5px 4px 0 0; white-space: nowrap; }
.mk:nth-child(5) { margin-left: 6px; }
.mk:nth-child(4) { margin-left: 9px; }
.mk-more { margin: -5px 0 0 19px; font: 16px/16px "Liberation Sans", sans-serif; color: #777; }
.mk-grip { width: 2px; height: 8px; margin-left: 69px; background: repeating-linear-gradient(#bbb 0 2px, transparent 2px 4px); }
.apps { margin: -4px 0 0 9px; }
.marks .caret { margin-top: 2px; }
.mk-green { width: 12px; height: 9px; margin-left: 18px; background: #5cb85c; }
.btabs { height: 28px; flex: none; background: #f1f1f1; display: flex; align-items: flex-end; border-bottom: 1px solid #a8a8a8; position: relative; }
.btab { height: 27px; display: flex; align-items: center; border: 1px solid #b0b0b0; border-bottom: 0; border-radius: 3px 3px 0 0; flex: none; white-space: nowrap; overflow: hidden; color: #666; }
.btab-t { width: 142px; overflow: hidden; flex: none; }
.btab-x { font: 17px/16px "Liberation Sans", sans-serif; color: #999; margin-left: 10px; }
.b1 { width: 164px; padding-left: 0; border-left: 0; }
.b1 .btab-t { margin-left: -2px; }
.b2 { width: 195px; margin-left: 1px; padding-left: 6px; }
.b2 .btab-t { margin-left: 3px; }
.b3 { width: 182px; height: 29px; margin-left: 1px; margin-bottom: -1px; background: #fff; padding-left: 5px; color: #222; border-right: 0; border-color: #999; }
.b3 .btab-t { margin-left: 4px; }
.band { margin-top: 48px; height: 64px; flex: none; background: #fafafa; border-top: 1px solid #e6e6e6; border-bottom: 1px solid #e6e6e6; display: flex; align-items: center; justify-content: space-between; }
.q-title { margin: 0 0 0 1px; font-weight: normal; font-size: 18px; line-height: 24px; color: #555; padding-top: 4px; }
.q-user { display: flex; align-items: center; font-size: 14px; color: #555; width: 79px; margin-top: 2px; white-space: nowrap; flex: none; }
.q-user .bar { width: 1px; height: 14px; background: #777; margin: 0 5px; flex: none; }
.q-user svg { margin-right: 3px; }
.stats { height: 57px; flex: none; padding-top: 20px; font-size: 14px; line-height: 20px; color: #3a6ea5; margin-left: -7px; white-space: nowrap; }
.post { height: 511px; flex: none; display: flex; align-items: center; }
.post-q { width: 112px; flex: none; margin: 0 0 6px; font-size: 16px; line-height: 20px; color: #333; white-space: nowrap; }
.detail { display: block; width: 428px; height: 511px; flex: none; }
.cadnum text { font: 25px "Liberation Sans", sans-serif; fill: none; stroke: #fff; stroke-width: .8; }
.cadnote { font: 11.400px "Noto Sans CJK SC", sans-serif; fill: #fff; }
.hscroll { margin-top: 20px; height: 16px; flex: none; background: #f0f0f0; padding: 1px 0 0 71px; }
.thumb { display: block; width: 357px; height: 13px; background: #c0c0c0; }
.bstatus { flex: 1; margin-top: 1px; background: #f8f8f8; border-top: 1px solid #dcdcdc; display: flex; align-items: center; padding-left: 0; color: #888; white-space: nowrap; }
.bstatus .first { margin-left: 249px; }

/* dialog */
.dialog {
  position: absolute;
  left: 0;
  top: 192px;
  width: 677px;
  height: 601px;
  background: #ece9d8;
  border-right: 3px solid #0a3dcc;
  display: flex;
  flex-direction: column;
  overflow: hidden;
}
.dlg-title { height: 23px; flex: none; background: linear-gradient(#0a5ee6 0, #0b62ea 30%, #0347cf 100%); display: flex; justify-content: flex-end; align-items: center; padding-right: 2px; }
.dlg-x { width: 14px; height: 14px; background: #e0603c; border: 1px solid #fff; border-radius: 2px; color: #fff; font: bold 13px/11px "Liberation Sans", sans-serif; text-align: center; }
.dt1 { height: 26px; background: #f4f2e8; padding-bottom: 4px; }
.dt2 { height: 24px; background: #ece9d8; padding-bottom: 2px; }
.radio { flex: none; display: block; width: 11px; height: 11px; border: 1px solid #8a9a9a; border-radius: 50%; background: #fff; }
.first-radio { margin-left: -3px; }
.num-in { flex: none; width: 76px; height: 20px; border: 1px solid #b4b2a4; background: #f2f0e6; color: #aaa; display: flex; align-items: center; justify-content: flex-end; padding-right: 20px; position: relative; }
.spin { position: absolute; right: 0; top: 0; width: 14px; height: 18px; border-left: 1px solid #dcdacc; background: linear-gradient(#f8f7f0, #e8e6da); }
.section { display: block; width: 674px; height: 478px; flex: none; }
.g-dark { fill: none; stroke: #1e7a1e; stroke-width: 1; }
.g-grid { fill: none; stroke: #cfcfcf; stroke-width: 1; }
.g-lbl text { font: 12px "Liberation Sans", sans-serif; fill: #cccccc; }
.g-dim { fill: none; stroke: #fff; stroke-width: 1; }
.g-shape { fill: none; stroke: #e8101a; stroke-width: 3; stroke-linejoin: round; }
.g-num text { font: bold 17px "Liberation Mono", monospace; letter-spacing: -1.200px; fill: #26e02e; }
.dlg-foot { flex: 1; display: flex; flex-direction: column; min-height: 0; }
.foot-gap { height: 23px; flex: none; border-bottom: 1px solid #a8a698; box-shadow: 0 1px 0 #fff; }
.foot-btns { display: flex; padding: 9px 0 0 236px; }
.xpbtn { flex: none; height: 21px; border: 1px solid #003c74; border-radius: 3px; background: linear-gradient(#fefefc, #f2f0e4); text-align: center; line-height: 20px; white-space: nowrap; }
.b104 { width: 104px; margin-right: 24px; }
.b112 { width: 112px; margin-right: 26px; }
.b71 { width: 71px; margin-right: 16px; }
.b71.last { width: 71px; margin-right: 0; }
.dflt { box-shadow: inset 0 0 0 2px #bcd0ef; }

.arrows { position: absolute; left: 0; top: 0; width: 1419px; height: 801px; pointer-events: none; }
.taskbar { position: absolute; left: 0; top: 793px; width: 1419px; height: 8px; background: linear-gradient(#3f87e2, #2a63cd 40%, #2f6fd8); }
.start { display: block; position: absolute; left: 0; top: 3px; width: 35px; height: 5px; background: #3a8a3c; }
```
